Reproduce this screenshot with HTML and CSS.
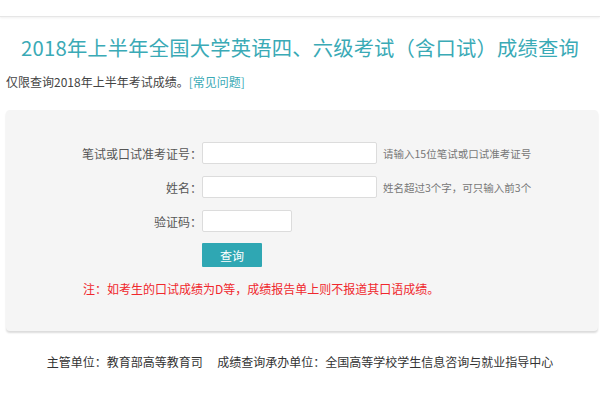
FILE: index.html
```html
<!DOCTYPE html>
<html>
  <head>
    <meta charset="utf-8">
    <link rel="stylesheet" href="styles.css">
  </head>
  <body>
    <div class="top-bar"></div>
    <h1 class="title">2018年上半年全国大学英语四、六级考试（含口试）成绩查询</h1>
    <p class="tip">仅限查询2018年上半年考试成绩。<a href="#" class="tip-link">[常见问题]</a></p>

    <div class="query-panel">
      <div class="form-row">
        <label class="form-label">笔试或口试准考证号：</label>
        <input type="text" class="form-input">
        <span class="form-hint">请输入15位笔试或口试准考证号</span>
      </div>
      <div class="form-row">
        <label class="form-label">姓名：</label>
        <input type="text" class="form-input">
        <span class="form-hint">姓名超过3个字，可只输入前3个</span>
      </div>
      <div class="form-row">
        <label class="form-label">验证码：</label>
        <input type="text" class="form-input code-input">
      </div>
      <div class="form-row button-row">
        <span class="form-label"></span>
        <button type="button" class="query-button">查询</button>
      </div>
      <p class="note">注：如考生的口试成绩为D等，成绩报告单上则不报道其口语成绩。</p>
    </div>

    <p class="footer">主管单位：教育部高等教育司&emsp;&nbsp;成绩查询承办单位：全国高等学校学生信息咨询与就业指导中心</p>
  </body>
</html>
```

FILE: styles.css
```css
body {
  margin: 0;
  background-color: #fff;
  font-family: "Noto Sans CJK SC", "Noto Sans", sans-serif;
  color: #333;
}
.top-bar {
  height: 16px;
  border-bottom: 1px solid #e6e6e6;
  box-shadow: 0 1px 2px #f0f0f0;
}
.title {
  margin: 0;
  padding-top: 15px;
  font-size: 20.3px;
  font-weight: normal;
  line-height: 30px;
  text-align: center;
  color: #3aaab6;
  letter-spacing: 0.2px;
}
.tip {
  margin: 11px 0 0 6px;
  font-size: 12px;
  line-height: 18px;
  color: #444;
}
.tip-link {
  color: #3aaab6;
  text-decoration: none;
}
.query-panel {
  margin: 19px 2px 0 6px;
  padding: 32px 0 33px;
  background-color: #f5f5f5;
  border-radius: 4px;
  box-shadow: 0 2px 2px #dcdcdc;
}
.form-row {
  display: flex;
  align-items: center;
  height: 22px;
  margin-bottom: 12px;
}
.form-row:nth-child(3) {
  margin-bottom: 11px;
}
.form-label {
  width: 196px;
  flex-shrink: 0;
  text-align: right;
  font-size: 12px;
  color: #555;
}
.form-input {
  box-sizing: border-box;
  width: 175px;
  height: 22px;
  margin: 0;
  padding: 0 4px;
  border: 1px solid #dcdcdc;
  border-radius: 2px;
  background-color: #fff;
}
.code-input {
  width: 90px;
}
.form-hint {
  margin-left: 6px;
  font-size: 10.5px;
  color: #777;
}
.button-row {
  height: 24px;
  margin-bottom: 0;
}
.query-button {
  width: 60px;
  height: 24px;
  padding: 0;
  border: none;
  border-radius: 1px;
  background-color: #2fa7b3;
  color: #fff;
  font-family: inherit;
  font-size: 12px;
}
.note {
  margin: 13px 0 0 77px;
  font-size: 12px;
  line-height: 18px;
  color: #f0282d;
}
.footer {
  margin: 22px 0 0;
  font-size: 12px;
  line-height: 18px;
  text-align: center;
  color: #333;
}
```
